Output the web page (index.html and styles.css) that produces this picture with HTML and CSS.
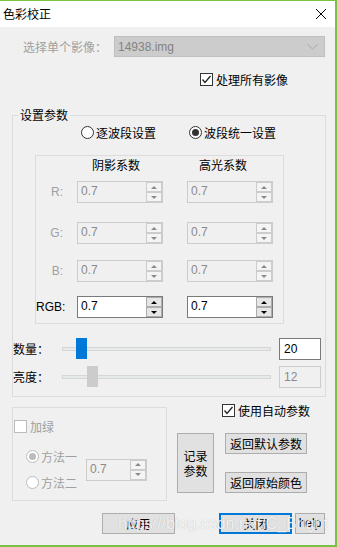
FILE: index.html
```html
<html>
    <head>
        <meta charset="utf-8">
        <link rel="stylesheet" href="styles.css">
    </head>
    <body>
        <div class="window">
            <div class="titlebar">
                <span class="title">色彩校正</span>
                <svg class="close" width="10" height="10" viewBox="0 0 10 10"><path d="M0 0L10 10M10 0L0 10" stroke="#000" stroke-width="1" fill="none"/></svg>
            </div>

            <div class="pick">
                <span class="pick-label muted">选择单个影像：</span>
                <div class="combo">
                    <span>14938.img</span>
                    <svg width="11" height="6" viewBox="0 0 11 6"><polyline points="0.5,0.5 5.5,5 10.5,0.5" stroke="#a8a8a8" fill="none"/></svg>
                </div>
            </div>

            <div class="check all">
                <span class="box"><svg width="11" height="11" viewBox="0 0 11 11"><polyline points="1.5,5.5 4,8.5 9.5,2" stroke="#222" stroke-width="1.3" fill="none"/></svg></span>
                <span>处理所有影像</span>
            </div>

            <fieldset class="group params">
                <legend>设置参数</legend>
                <div class="radios">
                    <span class="radio"><span class="dot"></span>逐波段设置</span>
                    <span class="radio"><span class="dot on"></span>波段统一设置</span>
                </div>

                <div class="inner">
                    <div class="heads"><span>阴影系数</span><span>高光系数</span></div>
                    <div class="brow r">
                        <span class="lab muted">R:</span>
                        <div class="spin"><span class="val">0.7</span><span class="arrows"><i class="up"></i><i class="down"></i></span></div>
                        <div class="spin"><span class="val">0.7</span><span class="arrows"><i class="up"></i><i class="down"></i></span></div>
                    </div>
                    <div class="brow g">
                        <span class="lab muted">G:</span>
                        <div class="spin"><span class="val">0.7</span><span class="arrows"><i class="up"></i><i class="down"></i></span></div>
                        <div class="spin"><span class="val">0.7</span><span class="arrows"><i class="up"></i><i class="down"></i></span></div>
                    </div>
                    <div class="brow b">
                        <span class="lab muted">B:</span>
                        <div class="spin"><span class="val">0.7</span><span class="arrows"><i class="up"></i><i class="down"></i></span></div>
                        <div class="spin"><span class="val">0.7</span><span class="arrows"><i class="up"></i><i class="down"></i></span></div>
                    </div>
                    <div class="brow rgb">
                        <span class="lab">RGB:</span>
                        <div class="spin on"><span class="val">0.7</span><span class="arrows"><i class="up"></i><i class="down"></i></span></div>
                        <div class="spin on"><span class="val">0.7</span><span class="arrows"><i class="up"></i><i class="down"></i></span></div>
                    </div>
                </div>

                <div class="slide first">
                    <span class="slide-label">数量：</span>
                    <div class="track"><span class="thumb blue" style="left: 13px"></span></div>
                    <div class="num on">20</div>
                </div>
                <div class="slide">
                    <span class="slide-label">亮度：</span>
                    <div class="track"><span class="thumb grey" style="left: 24px"></span></div>
                    <div class="num">12</div>
                </div>
            </fieldset>

            <div class="lower">
                <div class="green-box">
                    <div class="check off">
                        <span class="box"></span>
                        <span class="muted">加绿</span>
                    </div>
                    <div class="methods">
                        <div class="method-list">
                            <span class="radio off"><span class="dot on"></span>方法一</span>
                            <span class="radio off"><span class="dot"></span>方法二</span>
                        </div>
                        <div class="spin small"><span class="val">0.7</span><span class="arrows"><i class="up"></i><i class="down"></i></span></div>
                    </div>
                </div>

                <div class="side">
                    <div class="check auto">
                        <span class="box"><svg width="11" height="11" viewBox="0 0 11 11"><polyline points="1.5,5.5 4,8.5 9.5,2" stroke="#222" stroke-width="1.3" fill="none"/></svg></span>
                        <span>使用自动参数</span>
                    </div>
                    <div class="side-buttons">
                        <button class="btn record">记录<br>参数</button>
                        <div class="reset">
                            <button class="btn">返回默认参数</button>
                            <button class="btn">返回原始颜色</button>
                        </div>
                    </div>
                </div>
            </div>

            <div class="actions">
                <button class="btn apply">应用</button>
                <button class="btn shut">关闭</button>
                <button class="btn help">help</button>
            </div>

            <div class="watermark">https://blog.csdn.net/C_Bright</div>
        </div>
    </body>
</html>
```

FILE: styles.css
```css
*{
    box-sizing: border-box;
}
body{
    margin: 0;
    font-family: "Noto Sans CJK SC", sans-serif;
    font-size: 12px;
    line-height: 16px;
    color: #000;
}
.window{
    position: relative;
    width: 337px;
    height: 547px;
    background-color: #f0f0f0;
    border-top: 1px solid #7cc242;
    border-right: 2px solid #7cc242;
    border-bottom: 2px solid #7cc242;
    overflow: hidden;
}
.muted{
    color: #a0a0a0;
}

/* title */
.titlebar{
    height: 26px;
    background-color: #fff;
    display: flex;
    align-items: center;
    justify-content: space-between;
    padding: 0 9px 0 3px;
}

/* image picker */
.pick{
    display: flex;
    align-items: center;
    margin-top: 9px;
    padding-left: 23px;
    height: 21px;
}
.pick-label{
    width: 91px;
}
.combo{
    width: 211px;
    height: 21px;
    background-color: #cccccc;
    border: 1px solid #bfbfbf;
    display: flex;
    align-items: center;
    justify-content: space-between;
    padding: 0 6px 0 3px;
    font-family: "Liberation Sans", sans-serif;
    color: #838383;
}

/* checkboxes and radios */
.check{
    display: flex;
    align-items: center;
    gap: 3px;
    height: 13px;
}
.check .box{
    width: 13px;
    height: 13px;
    border: 1px solid #333;
    background-color: #fff;
    display: flex;
    align-items: center;
    justify-content: center;
}
.check.off .box{
    border-color: #bcbcbc;
}
.all{
    margin-top: 16px;
    margin-left: 200px;
}
.radio{
    display: inline-flex;
    align-items: center;
    gap: 2px;
}
.dot{
    width: 13px;
    height: 13px;
    border: 1px solid #333;
    border-radius: 50%;
    background-color: #fff;
    display: inline-flex;
    align-items: center;
    justify-content: center;
}
.dot.on::after{
    content: "";
    width: 7px;
    height: 7px;
    border-radius: 50%;
    background-color: #333;
}
.radio.off{
    color: #a0a0a0;
}
.radio.off .dot{
    border-color: #bcbcbc;
}
.radio.off .dot.on::after{
    background-color: #bcbcbc;
}

/* group boxes */
.group{
    margin: 21px 0 0 12px;
    padding: 0 0 8px 0;
    width: 314px;
    border: 1px solid #dcdcdc;
}
.group legend{
    margin-left: 5px;
    padding: 0 2px;
    line-height: 16px;
}
.radios{
    display: flex;
    margin-top: 1px;
    padding-left: 68px;
    gap: 33px;
    height: 17px;
    align-items: center;
}
.inner{
    margin: 14px 0 0 22px;
    width: 249px;
    border: 1px solid #dcdcdc;
    padding: 1px 0 5px 0;
}
.heads{
    display: flex;
    padding-left: 56px;
    gap: 59px;
}
.brow{
    display: flex;
    align-items: center;
}
.brow.r{ margin-top: 8px; }
.brow.g{ margin-top: 19px; }
.brow.b{ margin-top: 16px; }
.brow.rgb{ margin-top: 14px; }
.lab{
    width: 27px;
    margin-right: 14px;
    text-align: right;
    font-family: "Liberation Sans", sans-serif;
    font-size: 12px;
}
.brow .spin + .spin{
    margin-left: 24px;
}

/* spin boxes */
.spin{
    display: flex;
    width: 86px;
    height: 22px;
    border: 1px solid #cccccc;
    background-color: #f0f0f0;
    font-family: "Liberation Sans", sans-serif;
    color: #8a8a8a;
}
.spin .val{
    flex: 1;
    padding: 1px 0 0 3px;
    line-height: 16px;
}
.spin .arrows{
    width: 16px;
    display: flex;
    flex-direction: column;
}
.spin .arrows i{
    height: 10px;
    border: 1px solid #cccccc;
    background-color: #f4f4f4;
    display: flex;
    align-items: center;
    justify-content: center;
}
.spin .arrows .up::before{
    content: "";
    border-left: 3px solid transparent;
    border-right: 3px solid transparent;
    border-bottom: 3px solid #8a8a8a;
}
.spin .arrows .down::before{
    content: "";
    border-left: 3px solid transparent;
    border-right: 3px solid transparent;
    border-top: 3px solid #8a8a8a;
}
.spin.on{
    border-color: #7a7a7a;
    background-color: #fff;
    color: #000;
}
.spin.on .arrows i{
    border-color: #adadad;
    background-color: #e6e6e6;
}
.spin.on .arrows .up::before{
    border-bottom-color: #000;
}
.spin.on .arrows .down::before{
    border-top-color: #000;
}
.spin.small{
    width: 61px;
}

/* sliders */
.slide{
    display: flex;
    align-items: center;
    height: 22px;
    margin-top: 6px;
}
.slide.first{
    margin-top: 14px;
}
.slide-label{
    width: 49px;
}
.track{
    position: relative;
    width: 209px;
    height: 4px;
    background-color: #e7eaea;
    border: 1px solid #d6d6d6;
    margin-right: 8px;
}
.thumb{
    position: absolute;
    top: -10px;
    width: 11px;
    height: 21px;
}
.thumb.blue{
    background-color: #0078d7;
}
.thumb.grey{
    background-color: #cccccc;
}
.num{
    width: 42px;
    height: 22px;
    border: 1px solid #cccccc;
    padding: 2px 0 0 4px;
    font-family: "Liberation Sans", sans-serif;
    color: #8a8a8a;
}
.num.on{
    border-color: #7a7a7a;
    background-color: #fff;
    color: #000;
}

/* lower part */
.lower{
    display: flex;
    align-items: flex-start;
}
.green-box{
    margin: 10px 0 0 12px;
    width: 155px;
    height: 94px;
    border: 1px solid #dcdcdc;
}
.green-box .check{
    margin: 12px 0 0 1px;
}
.methods{
    display: flex;
    align-items: center;
    margin-top: 17px;
    padding-left: 13px;
}
.method-list{
    width: 60px;
    display: flex;
    flex-direction: column;
    gap: 13px;
}
.method-list .radio{
    height: 13px;
}
.side{
    margin: 7px 0 0 10px;
}
.auto{
    margin-left: 45px;
}
.side-buttons{
    display: flex;
    margin-top: 16px;
    gap: 11px;
}
.reset{
    display: flex;
    flex-direction: column;
    gap: 18px;
}

/* buttons */
.btn{
    font-family: "Noto Sans CJK SC", sans-serif;
    font-size: 12px;
    line-height: 15px;
    color: #000;
    background-color: #e1e1e1;
    border: 1px solid #adadad;
    padding: 0;
    width: 82px;
    height: 21px;
}
.btn.record{
    width: 37px;
    height: 60px;
}
.actions{
    display: flex;
    margin-top: 12px;
}
.btn.apply{
    width: 73px;
    margin-left: 102px;
}
.btn.shut{
    width: 73px;
    margin-left: 44px;
    border: 2px solid #0078d7;
}
.btn.help{
    width: 30px;
    margin-left: 3px;
    font-family: "Liberation Sans", sans-serif;
}

/* csdn watermark over the buttons */
.watermark{
    position: absolute;
    left: 118px;
    top: 515px;
    font-family: "Liberation Sans", sans-serif;
    font-size: 16px;
    line-height: 16px;
    color: rgba(255, 255, 255, 0.85);
    text-shadow: 0 0 1px rgba(0, 0, 0, 0.25);
}
```
